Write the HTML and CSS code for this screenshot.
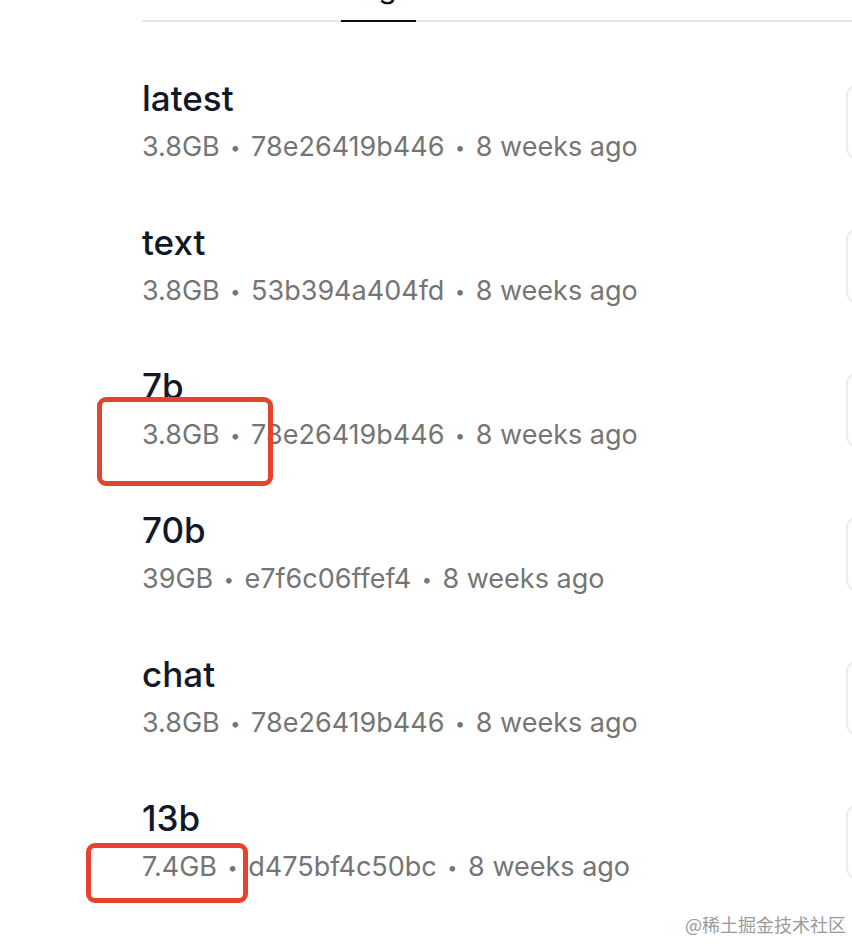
FILE: index.html
```html
<!DOCTYPE html>
<html lang="en">
<head>
<meta charset="utf-8">
<title>Tags</title>
<link rel="stylesheet" href="styles.css">
</head>
<body>
<main class="page">
  <nav class="tabs">
    <span class="tab">Model</span>
    <span class="tab tab-active">Tags</span>
  </nav>
  <ul class="tag-list">
    <li class="tag-row">
      <div class="tag-info">
        <div class="tag-name">latest</div>
        <div class="tag-meta">3.8GB <span class="sep">•</span> 78e26419b446 <span class="sep">•</span> 8 weeks ago</div>
      </div>
      <div class="tag-action"></div>
    </li>
    <li class="tag-row">
      <div class="tag-info">
        <div class="tag-name">text</div>
        <div class="tag-meta">3.8GB <span class="sep">•</span> 53b394a404fd <span class="sep">•</span> 8 weeks ago</div>
      </div>
      <div class="tag-action"></div>
    </li>
    <li class="tag-row">
      <div class="tag-info">
        <div class="tag-name">7b</div>
        <div class="tag-meta">3.8GB <span class="sep">•</span> 78e26419b446 <span class="sep">•</span> 8 weeks ago</div>
      </div>
      <div class="tag-action"></div>
    </li>
    <li class="tag-row">
      <div class="tag-info">
        <div class="tag-name">70b</div>
        <div class="tag-meta">39GB <span class="sep">•</span> e7f6c06ffef4 <span class="sep">•</span> 8 weeks ago</div>
      </div>
      <div class="tag-action"></div>
    </li>
    <li class="tag-row">
      <div class="tag-info">
        <div class="tag-name">chat</div>
        <div class="tag-meta">3.8GB <span class="sep">•</span> 78e26419b446 <span class="sep">•</span> 8 weeks ago</div>
      </div>
      <div class="tag-action"></div>
    </li>
    <li class="tag-row">
      <div class="tag-info">
        <div class="tag-name">13b</div>
        <div class="tag-meta">7.4GB <span class="sep">•</span> d475bf4c50bc <span class="sep">•</span> 8 weeks ago</div>
      </div>
      <div class="tag-action"></div>
    </li>
  </ul>
</main>
<div class="mark mark-a"></div>
<div class="mark mark-b"></div>
<div class="watermark">@稀土掘金技术社区</div>
</body>
</html>
```

FILE: styles.css
```css
html, body {
  margin: 0;
  padding: 0;
  background: #ffffff;
  overflow: hidden;
}
body {
  position: relative;
  width: 852px;
  height: 944px;
  font-family: Inter, "Noto Sans", "Liberation Sans", sans-serif;
  color: #111827;
}
.page {
  margin-left: 142px;
  width: 780px;
}
.tabs {
  display: flex;
  gap: 60px;
  margin-top: -33px;
  border-bottom: 2px solid #e5e5e5;
  padding-left: 44px;
}
.tab {
  font-size: 30px;
  line-height: 40px;
  padding: 0 4px 13px 3px;
  color: #6b7280;
}
.tab-active {
  color: #111111;
  border-bottom: 2px solid #111111;
  margin-bottom: -2px;
}
.tag-list {
  list-style: none;
  margin: 0;
  padding: 0;
}
.tag-row {
  display: flex;
  justify-content: space-between;
  align-items: center;
  height: 144px;
}
.tag-row:first-child {
  margin-top: 28px;
}
.tag-info {
  display: flex;
  flex-direction: column;
  gap: 7px;
}
.tag-name {
  font-size: 35px;
  font-weight: 500;
  line-height: 44px;
  color: #111827;
}
.tag-meta {
  font-size: 27px;
  line-height: 40px;
  color: #757575;
}
.sep {
  font-size: 18px;
  margin: 0 3px;
  vertical-align: 2px;
}
.tag-action {
  width: 76px;
  height: 76px;
  box-sizing: border-box;
  border: 2px solid #ececec;
  border-radius: 12px;
}
.mark {
  position: absolute;
  border: 5px solid #e5432e;
  border-radius: 9px;
  box-sizing: border-box;
}
.mark-a {
  left: 97px;
  top: 397px;
  width: 176px;
  height: 89px;
}
.mark-b {
  left: 86px;
  top: 843px;
  width: 162px;
  height: 60px;
}
.watermark {
  position: absolute;
  right: 6px;
  bottom: 7px;
  font-family: "Noto Sans CJK SC", sans-serif;
  font-size: 18px;
  color: #9a9a9a;
}
```
